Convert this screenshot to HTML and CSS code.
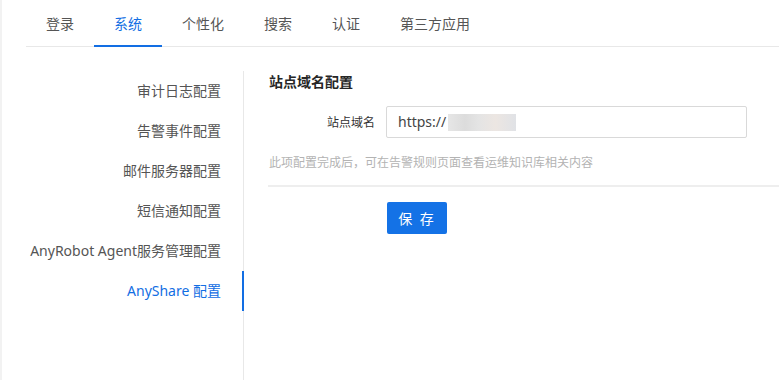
FILE: index.html
```html
<!DOCTYPE html>
<html>
<head>
  <meta charset="utf-8"/>
  <link rel="stylesheet" href="styles.css">
  <title>系统配置</title>
</head>
<body>
  <div class="main-container">
    <!-- top tabs -->
    <div class="tabs">
      <div class="tab">登录</div>
      <div class="tab active">系统</div>
      <div class="tab">个性化</div>
      <div class="tab">搜索</div>
      <div class="tab">认证</div>
      <div class="tab">第三方应用</div>
    </div>
    <div class="body-container">
      <div class="side-menu">
        <div class="menu-item">审计日志配置</div>
        <div class="menu-item">告警事件配置</div>
        <div class="menu-item">邮件服务器配置</div>
        <div class="menu-item">短信通知配置</div>
        <div class="menu-item">AnyRobot Agent服务管理配置</div>
        <div class="menu-item active">AnyShare 配置</div>
      </div>
      <div class="content">
        <div class="section-title">站点域名配置</div>
        <div class="form-row">
          <label class="form-label">站点域名</label>
          <div class="form-input">https://<span class="masked"></span></div>
        </div>
        <div class="hint">此项配置完成后，可在告警规则页面查看运维知识库相关内容</div>
        <div class="divider"></div>
        <div class="actions">
          <button class="btn-primary">保 存</button>
        </div>
      </div>
    </div>
  </div>
</body>
</html>
```

FILE: styles.css
```css
html, body {
  margin: 0;
  height: 100%;
}

body {
  background: #f2f2f2;
  font-family: "Noto Sans", "Noto Sans CJK SC", sans-serif;
  font-size: 14px;
  color: #595959;
}

.main-container {
  margin-left: 2px;   /* thin grey strip on the left edge */
  height: 100%;
  background: #fff;
  display: flex;
  flex-flow: column;
}

.tabs {
  display: flex;
  margin-left: 24px;
  border-bottom: 1px solid #e8e8e8;
}

.tab {
  position: relative;
  height: 46px;
  line-height: 47px;
  padding: 0 20px;
  color: #555;
  cursor: pointer;
}

.tab.active {
  color: #126ee3;
}

.tab.active::after {
  content: "";
  position: absolute;
  left: 0;
  right: 0;
  bottom: -1px;
  height: 2px;
  background: #126ee3;
}

.body-container {
  flex: 1 1 auto;
  display: flex;
  padding-top: 24px;
}

.side-menu {
  width: 241px;
  border-right: 1px solid #e8e8e8;
}

.menu-item {
  position: relative;
  height: 40px;
  line-height: 40px;
  padding-right: 22px;
  text-align: right;
  color: #555;
  white-space: nowrap;
}

.menu-item.active {
  color: #126ee3;
}

.menu-item.active::after {
  content: "";
  position: absolute;
  top: 0;
  bottom: 0;
  right: -1px;
  width: 2px;
  background: #126ee3;
}

.content {
  flex: 1 1 auto;
  padding-left: 25px;
}

.section-title {
  font-weight: bold;
  color: #262626;
  line-height: 22px;
}

.form-row {
  display: flex;
  align-items: center;
  margin-top: 13px;
}

.form-label {
  width: 106px;
  margin-right: 11px;
  text-align: right;
  font-size: 12px;
  color: #333;
}

.form-input {
  box-sizing: border-box;
  width: 361px;
  height: 32px;
  line-height: 30px;
  padding: 0 11px;
  border: 1px solid #d9d9d9;
  border-radius: 2px;
  color: #444;
  display: flex;
  align-items: center;
}

.masked {
  display: inline-block;
  width: 68px;
  height: 17px;
  margin-left: 2px;
  background: linear-gradient(90deg, #e6e6e6 0%, #dcdcdc 25%, #e4e4e4 45%, #ece6e2 70%, #e0e2e6 100%);
}

.hint {
  margin-top: 15px;
  font-size: 12px;
  line-height: 20px;
  color: #b3b3b3;
}

.divider {
  margin: 12px 0 0 -1px;
  height: 2px;
  background: #eeeeee;
}

.actions {
  margin-top: 15px;
  padding-left: 118px;
}

.btn-primary {
  width: 60px;
  height: 32px;
  border: none;
  border-radius: 2px;
  background: #1472e6;
  color: #fff;
  font-family: inherit;
  font-size: 14px;
  letter-spacing: 2px;
  cursor: pointer;
}
```
